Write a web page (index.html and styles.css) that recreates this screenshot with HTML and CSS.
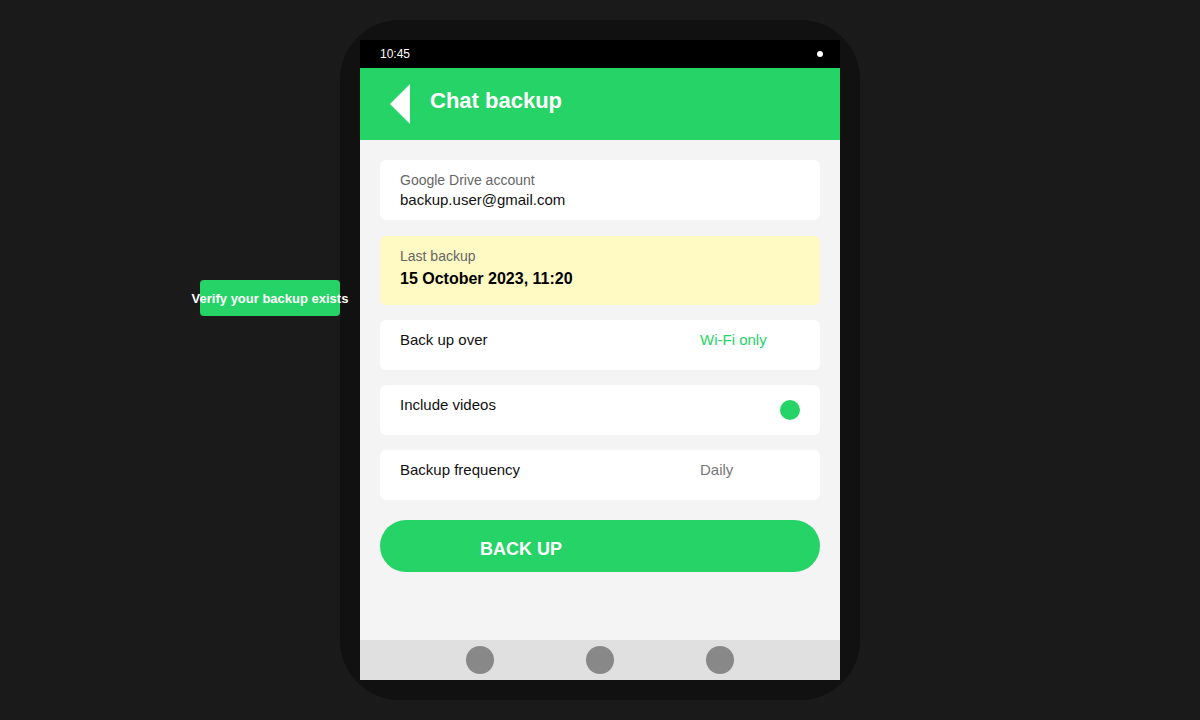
FILE: index.html
```html
<!DOCTYPE html>
<html>
<head>
<meta charset="utf-8">
<link rel="stylesheet" href="styles.css">
</head>
<body>
<div class="stage">
  <div class="tip">Verify your backup exists</div>
  <div class="phone">
    <div class="screen">
      <div class="status">
        <span class="time">10:45</span>
        <span class="dot"></span>
      </div>
      <div class="header">
        <span class="back"></span>
        <span class="title">Chat backup</span>
      </div>
      <div class="content">
        <div class="card account">
          <div class="label">Google Drive account</div>
          <div class="value">backup.user@gmail.com</div>
        </div>
        <div class="card last">
          <div class="label">Last backup</div>
          <div class="value strong">15 October 2023, 11:20</div>
        </div>
        <div class="card row">
          <span class="row-label">Back up over</span>
          <span class="row-value green">Wi-Fi only</span>
        </div>
        <div class="card row">
          <span class="row-label">Include videos</span>
          <span class="toggle"></span>
        </div>
        <div class="card row">
          <span class="row-label">Backup frequency</span>
          <span class="row-value grey">Daily</span>
        </div>
        <div class="btn">BACK UP</div>
      </div>
      <div class="nav">
        <span class="navbtn"></span>
        <span class="navbtn"></span>
        <span class="navbtn"></span>
      </div>
    </div>
  </div>
</div>
</body>
</html>
```

FILE: styles.css
```css
html, body {
  margin: 0;
  padding: 0;
  background: #1a1a1a;
  font-family: "Liberation Sans", Arial, sans-serif;
}
.stage {
  position: relative;
  width: 1200px;
  height: 720px;
  padding-top: 20px;
  box-sizing: border-box;
}
.tip {
  position: absolute;
  left: 200px;
  top: 280px;
  width: 140px;
  height: 36px;
  background: #25d366;
  border-radius: 4px;
  color: #fff;
  font-weight: bold;
  font-size: 13px;
  white-space: nowrap;
  display: flex;
  align-items: center;
  justify-content: center;
  z-index: 2;
}
.phone {
  width: 520px;
  height: 680px;
  margin: 0 auto;
  padding: 20px;
  box-sizing: border-box;
  background: #111;
  border-radius: 60px;
}
.screen {
  width: 480px;
  height: 640px;
  display: flex;
  flex-direction: column;
  background: #f4f4f4;
}
.status {
  height: 28px;
  background: #000;
  display: flex;
  align-items: center;
  justify-content: space-between;
  padding: 0 17px 0 20px;
  color: #fff;
  font-size: 12px;
}
.dot {
  width: 6px;
  height: 6px;
  border-radius: 50%;
  background: #fff;
}
.header {
  height: 72px;
  background: #25d366;
  display: flex;
  align-items: center;
  padding-left: 30px;
}
.back {
  width: 0;
  height: 0;
  border-top: 20px solid transparent;
  border-bottom: 20px solid transparent;
  border-right: 20px solid #fff;
  margin-right: 20px;
}
.title {
  color: #fff;
  font-weight: bold;
  font-size: 22px;
  margin-top: -6px;
}
.content {
  flex: 1;
  padding: 20px;
  display: flex;
  flex-direction: column;
  gap: 15px;
}
.card {
  background: #fff;
  border-radius: 6px;
  padding: 10px 20px;
}
.account {
  height: 60px;
  box-sizing: border-box;
  margin-bottom: 1px;
}
.last {
  background: #fff9c4;
  padding-bottom: 15px;
}
.label {
  font-size: 14px;
  line-height: 20px;
  color: #666;
}
.value {
  font-size: 15px;
  line-height: 20px;
  color: #111;
}
.value.strong {
  font-weight: bold;
  font-size: 16px;
  line-height: 22px;
  margin-top: 2px;
  color: #000;
}
.row {
  height: 50px;
  box-sizing: border-box;
  padding: 11px 20px;
  display: flex;
  align-items: flex-start;
  font-size: 15px;
  line-height: 17px;
}
.row-label {
  flex: 1;
  color: #111;
}
.row-value {
  width: 100px;
}
.green { color: #25d366; }
.grey { color: #777; }
.toggle {
  width: 20px;
  height: 20px;
  border-radius: 50%;
  background: #25d366;
  align-self: center;
}
.btn {
  margin-top: 5px;
  height: 52px;
  border-radius: 26px;
  background: #25d366;
  color: #fff;
  font-weight: bold;
  font-size: 18px;
  display: flex;
  align-items: center;
  padding-left: 100px;
  padding-top: 6px;
  box-sizing: border-box;
}
.nav {
  height: 40px;
  background: #e0e0e0;
  display: flex;
  align-items: center;
  justify-content: center;
  gap: 92px;
}
.navbtn {
  width: 28px;
  height: 28px;
  border-radius: 50%;
  background: #888;
}
```
